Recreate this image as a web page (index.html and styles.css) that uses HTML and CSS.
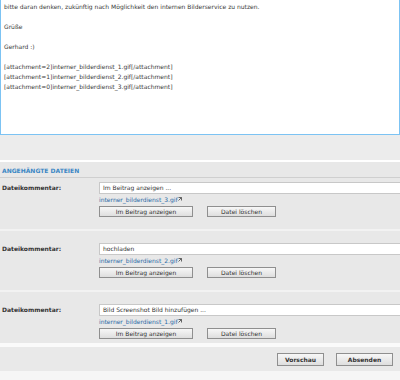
FILE: index.html
```html
<!DOCTYPE html>
<html lang="de">
<head>
    <meta charset="UTF-8">
    <title>Beitrag schreiben</title>
    <link rel="stylesheet" href="styles.css">
</head>
<body>
    <div class="editor">
        <p>bitte daran denken, zukünftig nach Möglichkeit den internen Bilderservice zu nutzen.</p>
        <p>Grüße</p>
        <p>Gerhard :)</p>
        <p>[attachment=2]interner_bilderdienst_1.gif[/attachment]<br>[attachment=1]interner_bilderdienst_2.gif[/attachment]<br>[attachment=0]interner_bilderdienst_3.gif[/attachment]</p>
    </div>
    <div class="spacer"></div>

    <div class="attachments">
        <h3 class="section-title">ANGEHÄNGTE DATEIEN</h3>

        <div class="file-row">
            <div class="label">Dateikommentar:</div>
            <div class="fields">
                <div class="input">Im Beitrag anzeigen ...</div>
                <a class="file-link" href="#">interner_bilderdienst_3.gif<svg width="5" height="6" viewBox="0 0 5 6"><path d="M0.5 1.5h3v3M3.5 1.5L0.5 4.5" fill="none" stroke="#555" stroke-width="0.9"/></svg></a>
                <div class="actions">
                    <button class="btn btn-show">Im Beitrag anzeigen</button>
                    <button class="btn btn-delete">Datei löschen</button>
                </div>
            </div>
        </div>
        <div class="row-gap"></div>

        <div class="file-row">
            <div class="label">Dateikommentar:</div>
            <div class="fields">
                <div class="input">hochladen</div>
                <a class="file-link" href="#">interner_bilderdienst_2.gif<svg width="5" height="6" viewBox="0 0 5 6"><path d="M0.5 1.5h3v3M3.5 1.5L0.5 4.5" fill="none" stroke="#555" stroke-width="0.9"/></svg></a>
                <div class="actions">
                    <button class="btn btn-show">Im Beitrag anzeigen</button>
                    <button class="btn btn-delete">Datei löschen</button>
                </div>
            </div>
        </div>
        <div class="row-gap"></div>

        <div class="file-row">
            <div class="label">Dateikommentar:</div>
            <div class="fields">
                <div class="input">Bild Screenshot Bild hinzufügen ...</div>
                <a class="file-link" href="#">interner_bilderdienst_1.gif<svg width="5" height="6" viewBox="0 0 5 6"><path d="M0.5 1.5h3v3M3.5 1.5L0.5 4.5" fill="none" stroke="#555" stroke-width="0.9"/></svg></a>
                <div class="actions">
                    <button class="btn btn-show">Im Beitrag anzeigen</button>
                    <button class="btn btn-delete">Datei löschen</button>
                </div>
            </div>
        </div>
    </div>

    <div class="submit-bar">
        <button class="btn btn-submit">Vorschau</button>
        <button class="btn btn-submit btn-send">Absenden</button>
    </div>
</body>
</html>
```

FILE: styles.css
```css
body {
    margin: 0;
    background: #f6f6f6;
    font-family: 'DejaVu Sans', Verdana, sans-serif;
    font-size: 6px;
    color: #3a3a3a;
    overflow: hidden;
}

.editor {
    box-sizing: border-box;
    height: 135px;
    background: #fff;
    border: 1px solid #7cc3f3;
    border-top: none;
    padding: 2px 3px;
    line-height: 10px;
}

.editor p {
    margin: 0 0 10px 0;
}

.spacer {
    height: 25px;
    background: #ececec;
}

.attachments {
    background: #e8e8e8;
    border-top: 2px solid #fff;
    border-bottom: 4px solid #fafafa;
}

.section-title {
    margin: 0;
    padding: 5px 2px 3px;
    font-size: 6px;
    font-weight: bold;
    color: #3a86c4;
    border-bottom: 1px solid #cfcfcf;
}

.file-row {
    display: flex;
    padding: 4px 0;
}

.label {
    width: 99px;
    padding: 2px 0 0 2px;
    box-sizing: border-box;
    font-weight: bold;
    color: #333;
}

.fields {
    flex: 1;
    display: flex;
    flex-direction: column;
}

.input {
    height: 10px;
    line-height: 10px;
    background: #fff;
    border: 1px solid #c8c8c8;
    border-right: none;
    padding-left: 3px;
    color: #333;
}

.file-link {
    display: flex;
    align-items: center;
    height: 10px;
    color: #2a6aa6;
    text-decoration: none;
}

.actions {
    display: flex;
    gap: 14px;
    margin-top: 2px;
}

.btn {
    box-sizing: border-box;
    height: 11px;
    padding: 0;
    font-family: 'DejaVu Sans', Verdana, sans-serif;
    font-size: 6px;
    color: #333;
    background: linear-gradient(#f7f7f7, #dedede);
    border: 1px solid #8f8f8f;
    border-radius: 0;
}

.btn-show {
    width: 94px;
}

.btn-delete {
    width: 69px;
}

.row-gap {
    height: 18px;
    display: flex;
    align-items: center;
}

.row-gap::after {
    content: "";
    display: block;
    width: 100%;
    height: 2px;
    background: #f2f2f2;
}

.submit-bar {
    display: flex;
    justify-content: flex-end;
    gap: 12px;
    height: 24px;
    padding: 6px 7px 0 0;
    box-sizing: border-box;
    background: #e9e9e9;
}

.btn-submit {
    width: 47px;
    height: 13px;
    font-weight: bold;
}

.btn-send {
    width: 57px;
}
```
